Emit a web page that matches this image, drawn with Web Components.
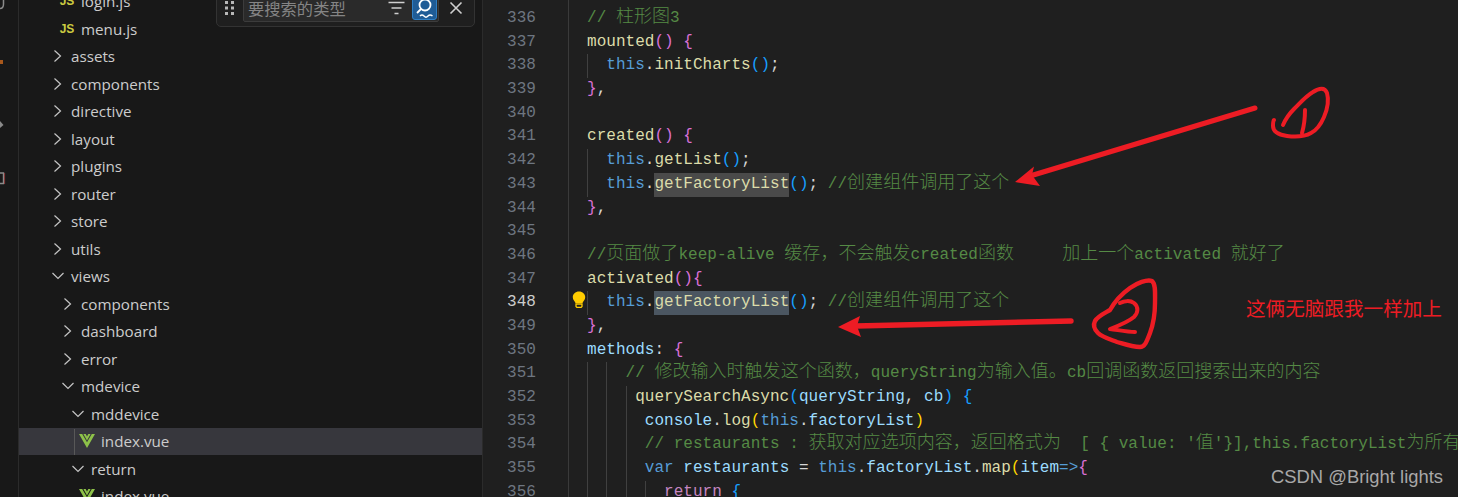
<!DOCTYPE html>
<html lang="zh">
<head>
<meta charset="utf-8">
<title>index.vue</title>
<style>
  html, body { margin: 0; height: 100%; background: #1f1f1f; overflow: hidden; }
</style>
</head>
<body>
<vs-window>
  <vs-activity slot="activity"></vs-activity>
  <vs-explorer slot="side">
    <tree-row kind="js" depth="2" label="login.js"></tree-row>
    <tree-row kind="js" depth="2" label="menu.js"></tree-row>
    <tree-row kind="closed" depth="1" label="assets"></tree-row>
    <tree-row kind="closed" depth="1" label="components"></tree-row>
    <tree-row kind="closed" depth="1" label="directive"></tree-row>
    <tree-row kind="closed" depth="1" label="layout"></tree-row>
    <tree-row kind="closed" depth="1" label="plugins"></tree-row>
    <tree-row kind="closed" depth="1" label="router"></tree-row>
    <tree-row kind="closed" depth="1" label="store"></tree-row>
    <tree-row kind="closed" depth="1" label="utils"></tree-row>
    <tree-row kind="open" depth="1" label="views"></tree-row>
    <tree-row kind="closed" depth="2" label="components"></tree-row>
    <tree-row kind="closed" depth="2" label="dashboard"></tree-row>
    <tree-row kind="closed" depth="2" label="error"></tree-row>
    <tree-row kind="open" depth="2" label="mdevice"></tree-row>
    <tree-row kind="open" depth="3" label="mddevice"></tree-row>
    <tree-row kind="vue" depth="4" label="index.vue" selected></tree-row>
    <tree-row kind="open" depth="3" label="return"></tree-row>
    <tree-row kind="vue" depth="4" label="index.vue"></tree-row>
    <find-widget slot="overlay" placeholder="要搜索的类型"></find-widget>
  </vs-explorer>
  <code-editor slot="editor"></code-editor>
  <red-notes slot="notes"></red-notes>
</vs-window>

<script>
class VsWindow extends HTMLElement {
  constructor() {
    super();
    this.attachShadow({mode: 'open'}).innerHTML = `
      <style>
        :host { display: flex; position: relative; width: 1458px; height: 497px; overflow: hidden; background: #1f1f1f; }
        ::slotted([slot=activity]) { flex: 0 0 18px; }
        ::slotted([slot=side]) { flex: 0 0 463px; }
        ::slotted([slot=editor]) { flex: 1 1 0; min-width: 0; }
      </style>
      <slot name="activity"></slot>
      <slot name="side"></slot>
      <slot name="editor"></slot>
      <slot name="notes"></slot>`;
  }
}

// only the clipped right edge of the activity bar is in the picture
class VsActivity extends HTMLElement {
  constructor() {
    super();
    this.attachShadow({mode: 'open'}).innerHTML = `
      <style>
        :host { display: block; background: #181818; border-right: 1px solid #2b2b2b; }
        svg { display: block; }
      </style>
      <svg width="18" height="200" viewBox="0 0 18 200" fill="none">
        <path d="M0 8.5C2.5 8.5 3.5 6.5 3.5 4V0" stroke="#8a8a8a" stroke-width="1.5"/>
        <rect x="0" y="60" width="3" height="4" fill="#a8581c"/>
        <path d="M0 121L3.5 125L0 128Z" fill="#8a8a8a"/>
        <path d="M0 173H3.5V183.5H0" stroke="#8a8a8a" stroke-width="1.4"/>
        <path d="M4.6 173V184" stroke="#8c3a3a"/>
      </svg>`;
  }
}

class VsExplorer extends HTMLElement {
  constructor() {
    super();
    this.attachShadow({mode: 'open'}).innerHTML = `
      <style>
        :host { display: block; position: relative; overflow: hidden; background: #181818; border-right: 1px solid #2b2b2b; box-sizing: content-box; }
        .tree { display: flex; flex-direction: column; margin-top: -12.5px; }
        ::slotted(find-widget) { position: absolute; left: 197px; top: -6px; }
      </style>
      <div class="tree"><slot></slot></div>
      <slot name="overlay"></slot>`;
  }
}

const rowTemplate = document.createElement('template');
rowTemplate.innerHTML = `
  <style>
    :host { display: flex; align-items: center; position: relative; height: 27.5px; color: #cccccc; font: 15.2px "Open Sans", "Noto Sans", sans-serif; white-space: nowrap; }
    :host([selected]) { background: #37373d; }
    :host([selected])::before { content: ""; position: absolute; left: 55px; top: 1px; bottom: 0; width: 1px; background: #585858; }
    .twist { display: flex; justify-content: center; flex: 0 0 20px; }
    .icon { display: flex; align-items: center; justify-content: center; flex: 0 0 20px; height: 16px; margin-left: -2px; margin-right: 4px; color: #cbcb41; font: bold 12px "Liberation Sans", sans-serif; }
    svg { display: block; }
  </style>
  <div class="twist"></div><div class="icon"></div><span class="label"></span>`;

class TreeRow extends HTMLElement {
  connectedCallback() {
    const root = this.attachShadow({mode: 'open'});
    root.appendChild(rowTemplate.content.cloneNode(true));
    const kind = this.getAttribute('kind');
    const depth = Number(this.getAttribute('depth'));
    const twist = root.querySelector('.twist');
    const icon = root.querySelector('.icon');
    root.querySelector('.label').textContent = this.getAttribute('label');

    if (kind === 'closed') {
      twist.innerHTML = '<svg width="10" height="16" viewBox="0 0 10 16" fill="none"><path d="M1.5 2.5L7.5 8L1.5 13.5" stroke="#c5c5c5" stroke-width="1.2"/></svg>';
      this.style.paddingLeft = (29 + (depth - 1) * 10) + 'px';
      icon.remove();
      twist.style.marginRight = '3px';
    } else if (kind === 'open') {
      twist.innerHTML = '<svg width="12" height="10" viewBox="0 0 12 10" fill="none"><path d="M0.5 2L6 7.5L11.5 2" stroke="#c5c5c5" stroke-width="1.2"/></svg>';
      this.style.paddingLeft = (29 + (depth - 1) * 10) + 'px';
      icon.remove();
      twist.style.marginRight = '3px';
    } else {
      twist.remove();
      this.style.paddingLeft = (40 + (depth - 2) * 10) + 'px';
      if (kind === 'js') icon.textContent = 'JS';
      else icon.innerHTML = '<svg width="16" height="14" viewBox="0 0 16 14"><path d="M0 0H3.2L8 8.2L12.8 0H16L8 14Z" fill="#8dc149"/><path d="M4.4 0H6.7L8 2.4L9.3 0H11.6L8 6.4Z" fill="#8dc149"/></svg>';
    }
  }
}

class FindWidget extends HTMLElement {
  constructor() {
    super();
    this.attachShadow({mode: 'open'}).innerHTML = `
      <style>
        :host { display: flex; align-items: center; box-sizing: border-box; width: 259px; height: 33px; padding: 0 0 5px 8px; background: #1f1f1f; border: 1px solid #333333; border-radius: 5px; color: #cccccc; }
        svg { display: block; flex: none; }
        .box { display: flex; align-items: center; box-sizing: border-box; width: 196px; height: 28px; margin-left: 9px; padding: 0 0 0 4px; background: #2a2a2a; border: 1px solid #3c3c3c; border-radius: 2px; }
        .ph { flex: 1; color: #858585; font: 16.3px "Noto Sans CJK SC", sans-serif; white-space: nowrap; }
        .match { display: flex; align-items: center; justify-content: center; width: 25px; height: 24px; margin-right: 1px; background: #1f5c96; border: 1px solid #2f7fc4; border-radius: 3px; box-sizing: border-box; }
      </style>
      <svg width="9" height="14" viewBox="0 0 9 14" fill="#b8b8b8">
        <rect x="0" y="0" width="3" height="3"/><rect x="6" y="0" width="3" height="3"/>
        <rect x="0" y="5.5" width="3" height="3"/><rect x="6" y="5.5" width="3" height="3"/>
        <rect x="0" y="11" width="3" height="3"/><rect x="6" y="11" width="3" height="3"/>
      </svg>
      <div class="box">
        <span class="ph">${this.getAttribute('placeholder')}</span>
        <svg width="17" height="14" viewBox="0 0 17 14" fill="none" stroke="#d0d0d0" stroke-width="1.5" style="margin-right:7px"><path d="M0.5 1.5H16.5M3.5 7H13.5M6.5 12.5H10.5"/></svg>
        <div class="match">
          <svg width="21" height="22" viewBox="0 0 21 22" fill="none" stroke="#ffffff" stroke-width="1.8">
            <circle cx="11" cy="8" r="5.5"/><path d="M7 12L3 16"/>
            <path d="M6 19C7.5 17.5 8.5 17.5 10 19S12.5 20.5 14 19S16.5 17.5 18.5 19" stroke-width="1.5"/>
          </svg>
        </div>
      </div>
      <svg width="14" height="14" viewBox="0 0 14 14" fill="none" stroke="#cfcfcf" stroke-width="1.6" style="margin-left:10px"><path d="M1.5 1.5L12.5 12.5M12.5 1.5L1.5 12.5"/></svg>`;
  }
}

const C = {
  cm: '#558a45', kw: '#569cd6', fn: '#dcdcaa', pink: '#da70d6', gold: '#ffd700', blue: '#179fff',
  v: '#9cdcfe', p: '#d4d4d4', ctl: '#c586c0', arrow: '#569cd6'
};

// [number, indent columns, guide columns, tokens, extra]
const LINES = [
  [336, 0, [], [['// 柱形图3', 'cm']]],
  [337, 0, [], [['mounted', 'fn'], ['()', 'pink'], [' ', 'p'], ['{', 'pink']]],
  [338, 2, [0], [['this', 'kw'], ['.', 'p'], ['initCharts', 'fn'], ['()', 'blue'], [';', 'p']]],
  [339, 0, [], [['}', 'pink'], [',', 'p']]],
  [340, 0, [], []],
  [341, 0, [], [['created', 'fn'], ['()', 'pink'], [' ', 'p'], ['{', 'pink']]],
  [342, 2, [0], [['this', 'kw'], ['.', 'p'], ['getList', 'fn'], ['()', 'blue'], [';', 'p']]],
  [343, 2, [0], [['this', 'kw'], ['.', 'p'], ['getFactoryList', 'fn', '#4a4a4a'], ['()', 'blue'], [';', 'p'], [' //创建组件调用了这个', 'cm']]],
  [344, 0, [], [['}', 'pink'], [',', 'p']]],
  [345, 0, [], []],
  [346, 0, [], [['//页面做了keep-alive 缓存，不会触发created函数     加上一个activated 就好了', 'cm']]],
  [347, 0, [], [['activated', 'fn'], ['()', 'pink'], ['{', 'pink']]],
  [348, 2, [0], [['this', 'kw'], ['.', 'p'], ['getFactoryList', 'fn', '#4b5661'], ['()', 'blue'], [';', 'p'], [' //创建组件调用了这个', 'cm']], 'active'],
  [349, 0, [], [['}', 'pink'], [',', 'p']]],
  [350, 0, [], [['methods', 'v'], [': ', 'p'], ['{', 'pink']]],
  [351, 4, [0, 2], [['// 修改输入时触发这个函数，queryString为输入值。cb回调函数返回搜索出来的内容', 'cm']]],
  [352, 5, [0, 2, 4], [['querySearchAsync', 'fn'], ['(', 'blue'], ['queryString', 'v'], [', ', 'p'], ['cb', 'v'], [')', 'blue'], [' ', 'p'], ['{', 'blue']]],
  [353, 6, [0, 2, 4], [['console', 'v'], ['.', 'p'], ['log', 'fn'], ['(', 'gold'], ['this', 'kw'], ['.', 'p'], ['factoryList', 'v'], [')', 'gold']]],
  [354, 6, [0, 2, 4], [['// restaurants : 获取对应选项内容，返回格式为  [ { value: \'值\'}],this.factoryList为所有', 'cm']]],
  [355, 6, [0, 2, 4], [['var', 'kw'], [' ', 'p'], ['restaurants', 'v'], [' = ', 'p'], ['this', 'kw'], ['.', 'p'], ['factoryList', 'v'], ['.', 'p'], ['map', 'fn'], ['(', 'gold'], ['item', 'v'], ['=>', 'arrow'], ['{', 'pink']]],
  [356, 8, [0, 2, 4, 6], [['return', 'ctl'], [' ', 'p'], ['{', 'blue']]]
];

const lineTemplate = document.createElement('template');
lineTemplate.innerHTML = `
  <style>
    :host { display: grid; grid-template-columns: 53px 1fr; column-gap: 51px; height: 23.7px; line-height: 23.7px; white-space: pre; }
    .num { text-align: right; color: #6e7681; }
    :host([active]) .num { color: #cccccc; }
    .code { position: relative; min-width: 0; overflow: hidden; }
    .guide { position: absolute; top: 0; bottom: 0; width: 1px; background: #404040; }
    .hl { display: inline-block; height: 23.7px; vertical-align: top; }
    .cjk { font-family: "Noto Sans CJK SC", sans-serif; font-size: 18px; font-weight: 300; line-height: 0; }
  </style>
  <span class="num"></span><div class="code"></div>`;

class CodeLine extends HTMLElement {
  setLine([num, indent, guides, tokens, extra]) {
    const root = this.attachShadow({mode: 'open'});
    root.appendChild(lineTemplate.content.cloneNode(true));
    root.querySelector('.num').textContent = num;
    const code = root.querySelector('.code');
    if (extra) this.setAttribute('active', '');
    code.style.paddingLeft = `calc(${indent} * 9.63px)`;

    for (const g of guides) {
      const guide = document.createElement('i');
      guide.className = 'guide';
      guide.style.left = (g * 9.63) + 'px';
      code.appendChild(guide);
    }
    for (const [text, color, bg] of tokens) {
      const span = document.createElement('span');
      span.style.color = C[color];
      if (bg) {
        span.className = 'hl';
        span.style.background = bg;
      }
      // CJK runs are wider than the mono cell in the editor
      text.split(/([\u3000-\u9fff\uff00-\uffef]+)/).forEach((part, i) => {
        if (!part) return;
        if (i % 2) {
          const cjk = document.createElement('span');
          cjk.className = 'cjk';
          cjk.textContent = part;
          span.appendChild(cjk);
        } else {
          span.appendChild(document.createTextNode(part));
        }
      });
      code.appendChild(span);
    }
  }
}

class CodeEditor extends HTMLElement {
  constructor() {
    super();
    this.attachShadow({mode: 'open'}).innerHTML = `
      <style>
        :host { display: block; position: relative; height: 497px; overflow: hidden; background: #1f1f1f; font: 16px "Liberation Mono", monospace; letter-spacing: 0.03px; }
        .lines { display: flex; flex-direction: column; padding-top: 7px; }
        .rule { position: absolute; left: 85px; top: 0; bottom: 0; width: 1px; background: #3a3a3a; }
        .bulb { position: absolute; left: 89px; top: 291px; }
      </style>
      <div class="lines"></div>
      <div class="rule"></div>
      <svg class="bulb" width="14" height="17" viewBox="0 0 14 17">
        <path d="M7 0.5C3.4 0.5 0.8 3 0.8 6.3C0.8 8.8 2.6 10 3.5 12H10.5C11.4 10 13.2 8.8 13.2 6.3C13.2 3 10.6 0.5 7 0.5Z" fill="#ffcc00"/>
        <path d="M4 13H10V15.5L9 16.5H5L4 15.5Z" fill="none" stroke="#ffcc00" stroke-width="1.3"/>
      </svg>`;
    const lines = this.shadowRoot.querySelector('.lines');
    for (const line of LINES) {
      const el = document.createElement('code-line');
      el.setLine(line);
      lines.appendChild(el);
    }
  }
}

// hand drawn markup that was put on top of the screenshot
class RedNotes extends HTMLElement {
  constructor() {
    super();
    this.attachShadow({mode: 'open'}).innerHTML = `
      <style>
        :host { display: block; position: absolute; inset: 0; pointer-events: none; }
        svg { position: absolute; left: 0; top: 0; }
        .remark { position: absolute; left: 1246px; top: 294px; color: #ed1c24; font: 400 19.6px/28px "Noto Sans CJK SC", sans-serif; white-space: nowrap; }
        .mark { position: absolute; left: 1271px; top: 465px; color: #a8a8a8; font: 18.4px/24px "Liberation Sans", sans-serif; white-space: nowrap; }
      </style>
      <svg width="1458" height="497" viewBox="0 0 1458 497" fill="none" stroke="#ed1c24" stroke-linecap="round" stroke-linejoin="round">
        <path d="M1255 108L1030 176" stroke-width="5"/>
        <path d="M1015 182L1034 166.5L1032 175L1040 186Z" fill="#ed1c24" stroke="none"/>
        <path d="M1283 125C1286 118 1290 113 1294 109C1300 103 1306 96 1313 92C1319 88 1325 87 1327 93C1329 100 1327 110 1324 117C1321 124 1317 130 1311 133C1304 137 1295 137 1287 136C1280 135 1273 132 1273 126C1273 123 1273 121 1274 120" stroke-width="4"/>
        <path d="M1305 110C1305 118 1304 126 1302 133" stroke-width="4"/>
        <path d="M1071 321L856 326" stroke-width="5.4"/>
        <path d="M838 327L860 316L857 326L861 337Z" fill="#ed1c24" stroke="none"/>
        <path d="M1110 310C1115 301 1123 293 1130 288C1137 283 1147 279 1152 281C1156 284 1155 295 1155 303C1155 315 1153 325 1150 333C1147 341 1145 347 1140 347C1132 347 1124 344 1117 342C1109 339 1102 337 1098 333C1094 329 1093 325 1095 321C1098 316 1105 313 1110 310Z" stroke-width="4.4"/>
        <path d="M1120 303C1124 301 1130 300 1134 303C1139 307 1138 313 1134 317C1128 322 1118 326 1110 329C1118 330 1127 332 1135 332" stroke-width="4"/>
      </svg>
      <span class="remark">这俩无脑跟我一样加上</span>
      <span class="mark">CSDN @Bright lights</span>`;
  }
}

customElements.define('vs-window', VsWindow);
customElements.define('vs-activity', VsActivity);
customElements.define('vs-explorer', VsExplorer);
customElements.define('tree-row', TreeRow);
customElements.define('find-widget', FindWidget);
customElements.define('code-line', CodeLine);
customElements.define('code-editor', CodeEditor);
customElements.define('red-notes', RedNotes);
</script>
</body>
</html>
